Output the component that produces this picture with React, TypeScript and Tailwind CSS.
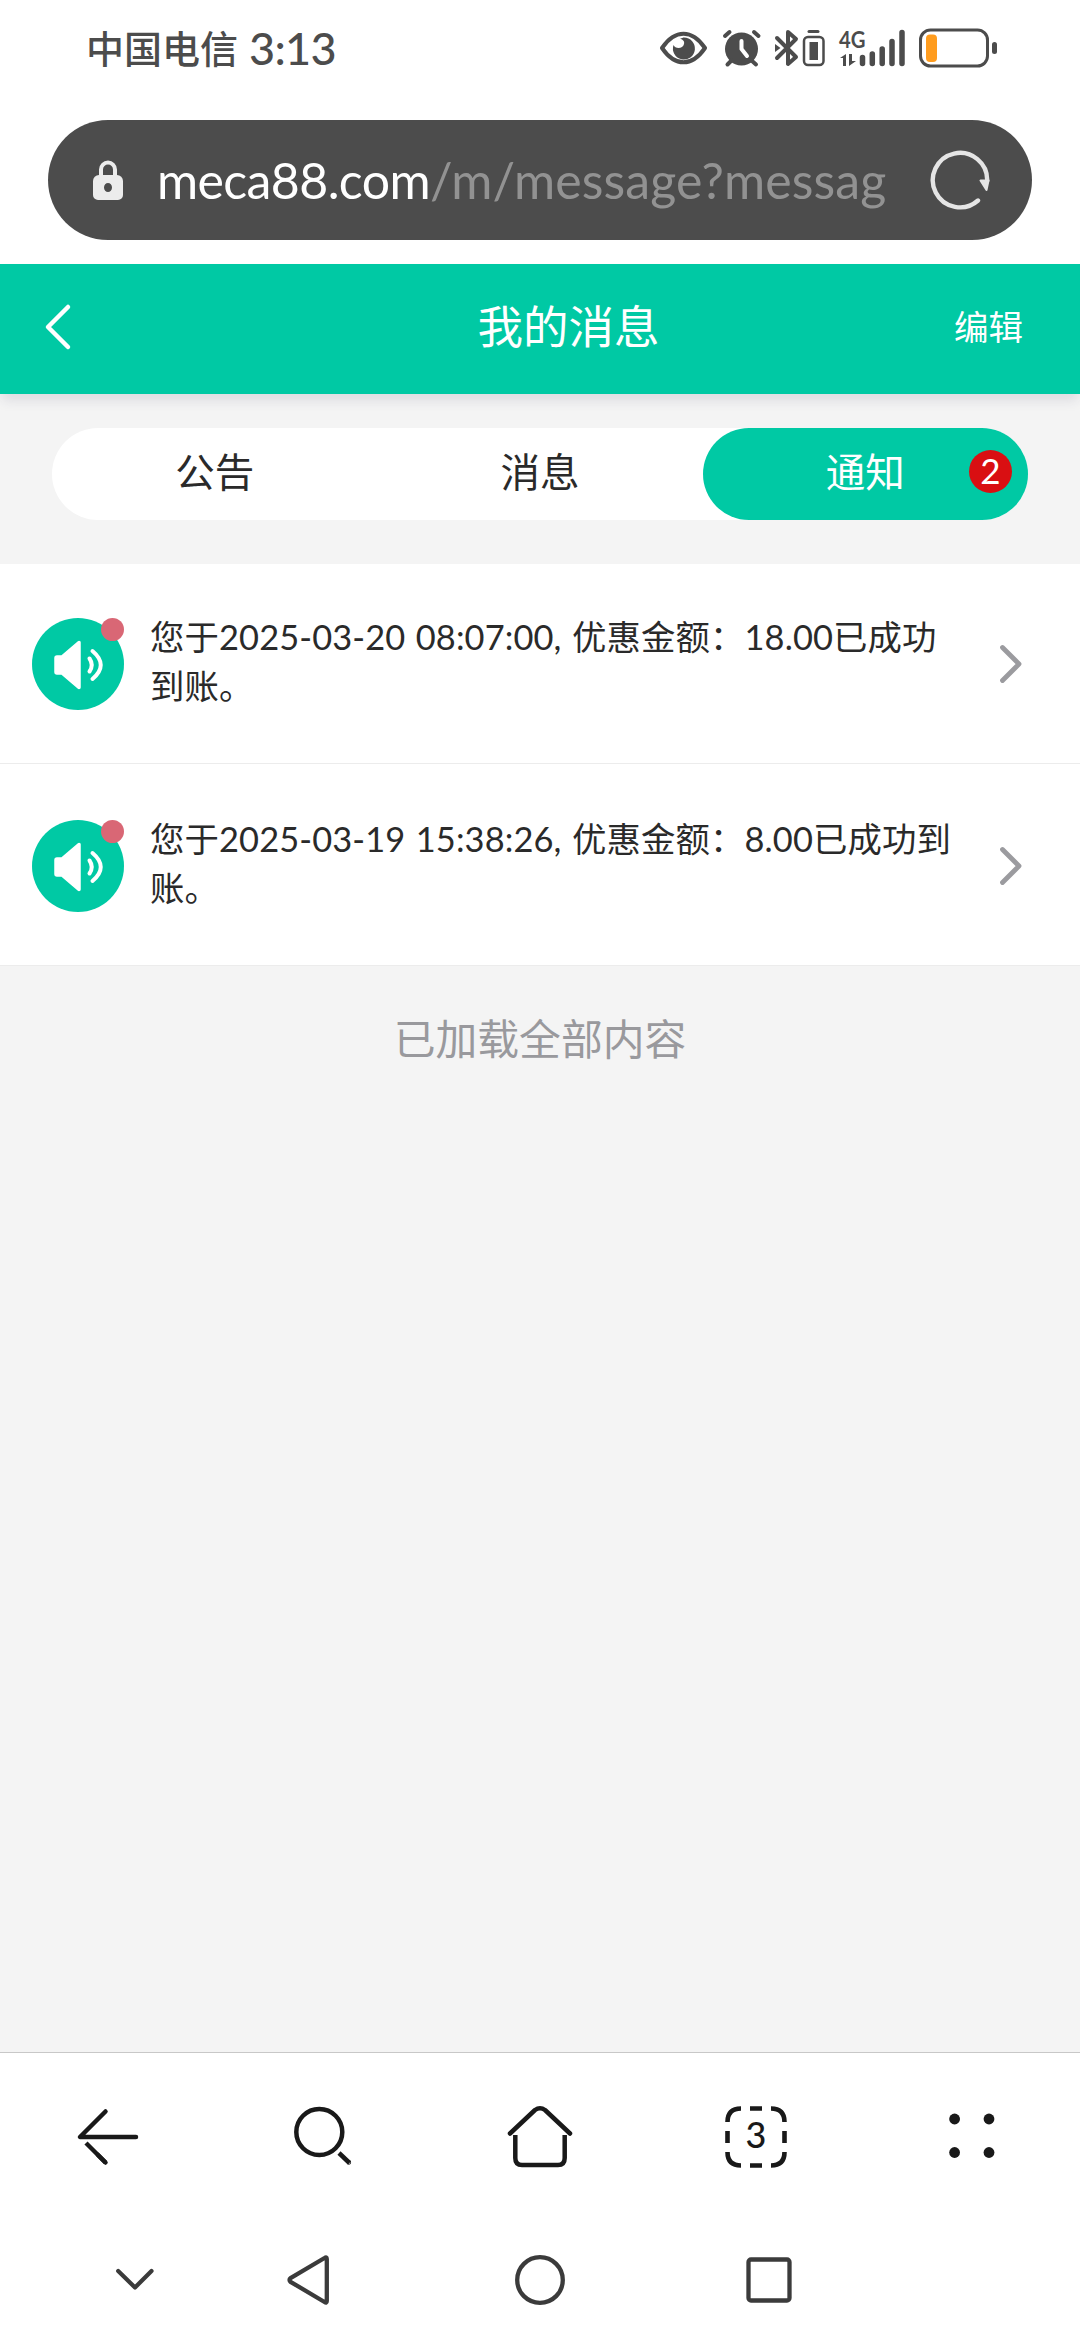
import React from 'react';

interface Message {
  id: number;
  text: string;
}

const messages: Message[] = [
  { id: 1, text: '您于2025-03-20 08:07:00, 优惠金额：18.00已成功到账。' },
  { id: 2, text: '您于2025-03-19 15:38:26, 优惠金额：8.00已成功到账。' },
];

const StatusBar: React.FC = () => (
  <div className="flex h-[96px] items-center pl-[86px] pr-[80px] text-[#4c4c4c]">
    <span className="text-[38px] leading-none font-medium">中国电信</span>
    <span className="ml-[11px] text-[45px] leading-none font-medium tracking-[-0.7px]">3:13</span>
    <svg className="ml-auto" width="340" height="60" viewBox="660 18 340 60" fill="none" stroke="#4c4c4c">
      {/* eye */}
      <path d="M662 48C675 29 692 29 705 48C692 67 675 67 662 48Z" strokeWidth="4" strokeLinejoin="round" />
      <path d="M684 37.500A11 11 0 1 1 673.500 45C675 49 683 49 684 44C685 41 682 39 680 39C682 38 683 37.500 684 37.500Z" fill="#4c4c4c" stroke="none" />
      {/* alarm */}
      <circle cx="741.500" cy="49" r="16.500" fill="#4c4c4c" stroke="none" />
      <path d="M725 36L729.500 32M758.500 36L754 32M732 60L727.500 64.500M751 60L756 64.500" strokeWidth="4" strokeLinecap="round" />
      <path d="M741.500 41V49L747 56" stroke="#fff" strokeWidth="4" strokeLinecap="round" strokeLinejoin="round" />
      {/* bluetooth */}
      <path d="M777 38L796 57L788 64V32L796 39L777 58" strokeWidth="4" strokeLinecap="round" strokeLinejoin="round" />
      <path d="M775 44L780.500 48L775 52Z" fill="#4c4c4c" stroke="none" />
      {/* device battery */}
      <rect x="804" y="37" width="19.500" height="28" rx="4" strokeWidth="2.500" />
      <rect x="809.500" y="42" width="8.500" height="18" fill="#4c4c4c" stroke="none" />
      <path d="M809 31.500H818" strokeWidth="3" strokeLinecap="round" />
      {/* mobile data */}
      <text x="839" y="47.500" fontSize="23.500" fontWeight="700" fill="#4c4c4c" stroke="none" textLength="26.500" lengthAdjust="spacingAndGlyphs">4G</text>
      <path d="M840 58L846 54V66H843V58ZM849 54V66L856 61H852V54Z" fill="#4c4c4c" stroke="none" />
      <path d="M862.500 57.500V63.500M872.300 54V63.500M882.200 49V63.500M892 41.500V63.500M902 32.500V63.500" strokeWidth="5.500" strokeLinecap="round" />
      {/* battery */}
      <rect x="920.500" y="30" width="67" height="36" rx="10" strokeWidth="3" />
      <rect x="926" y="34.500" width="11" height="27.500" rx="4" fill="#ff9c1e" stroke="none" />
      <rect x="992" y="42" width="5" height="12" rx="2.500" fill="#4c4c4c" stroke="none" />
    </svg>
  </div>
);

const AddressBar: React.FC = () => (
  <div className="mx-[48px] mt-[24px] mb-[24px] flex h-[120px] items-center rounded-full bg-[#4c4c4c] pl-[45px] pr-[42px]">
    <svg width="30" height="40" viewBox="0 0 30 40">
      <path d="M8 16V9.500A7 7 0 0 1 22 9.500V16" fill="none" stroke="#ececec" strokeWidth="4" />
      <path fillRule="evenodd" fill="#ececec" d="M6 15H24A6 6 0 0 1 30 21V35A5 5 0 0 1 25 40H5A5 5 0 0 1 0 35V21A6 6 0 0 1 6 15ZM15 23A4 4.500 0 1 0 15 32A4 4.500 0 1 0 15 23Z" />
    </svg>
    <div className="ml-[34px] w-[731px] overflow-hidden text-[50px] leading-[76px] whitespace-nowrap text-[#929292]">
      <span className="tracking-[-0.6px] text-white">meca88.com</span>
      <span className="tracking-[0.15px]">/m/message?messageType=3</span>
    </div>
    <svg className="ml-auto" width="60" height="60" viewBox="0 0 60 60" fill="none">
      <path d="M48 50.500A27.200 27.200 0 1 1 57.200 31" stroke="#e5e5e5" strokeWidth="4.400" strokeLinecap="round" />
      <path d="M50.500 30.500H58.500L56.500 40Z" fill="#e5e5e5" stroke="#e5e5e5" strokeWidth="2" strokeLinejoin="round" />
    </svg>
  </div>
);

const PageHeader: React.FC = () => (
  <div className="relative grid h-[130px] grid-cols-[1fr_auto_1fr] items-center bg-[#00c9a4] pr-[57px] pb-[4px] pl-[44px] text-white shadow-[0_8px_12px_-2px_rgba(40,40,80,0.12)]">
    <svg width="28" height="48" viewBox="0 0 28 48" fill="none" stroke="#fff" strokeWidth="4.500" strokeLinecap="round" strokeLinejoin="round">
      <path d="M24 4L4 24L24 44" />
    </svg>
    <h1 className="ml-[70px] text-[45.500px] leading-none">我的消息</h1>
    <button className="justify-self-end text-[34.500px] leading-none">编辑</button>
  </div>
);

const MessageTabs: React.FC = () => (
  <div className="mx-[52px] mt-[34px] mb-[44px] grid h-[92px] grid-cols-3 rounded-full bg-white text-[39.500px] leading-none text-[#2a2a2a]">
    <button className="pb-[4px]">公告</button>
    <button className="pb-[4px]">消息</button>
    <button className="relative rounded-full bg-[#00c9a4] pb-[4px] text-white">
      通知
      <span className="absolute top-[22px] right-[16px] flex h-[43px] w-[43px] items-center justify-center rounded-full bg-[#d90f12] pb-[2px] text-[35px]">2</span>
    </button>
  </div>
);

const MessageRow: React.FC<{ message: Message }> = ({ message }) => (
  <li className="flex h-[200px] border-b border-[#ececec] bg-white pt-[54px] pl-[32px] last:h-[202px] last:pt-[56px]">
    <div className="relative h-[92px] w-[92px] rounded-full bg-[#00c9a4]">
      <svg width="92" height="92" viewBox="0 0 92 92" fill="none">
        <path d="M25 39H30L47 24.500V69.500L30 55H25Q24 55 24 54V40Q24 39 25 39Z" fill="#fff" stroke="#fff" strokeWidth="3.500" strokeLinejoin="round" />
        <path d="M57.500 40.500Q62 47 57.500 53.500M60.500 33Q77 47 60.500 61" stroke="#fff" strokeWidth="4" strokeLinecap="round" />
      </svg>
      <span className="absolute top-0 right-0 h-[23px] w-[23px] rounded-full bg-[#d96775]" />
    </div>
    <p className="mt-[-6px] ml-[26px] w-[812px] text-[34.400px] leading-[49px] tracking-[0.12px] break-all text-[#2a2a2a] [word-spacing:1.500px]">
      {message.text}
    </p>
    <svg className="mt-[24px] ml-[34px]" width="30" height="44" viewBox="0 0 30 44" fill="none" stroke="#9b9b9f" strokeWidth="4.800" strokeLinecap="round" strokeLinejoin="round">
      <path d="M6.500 5.500L23 22L6.500 38.500" />
    </svg>
  </li>
);

const BrowserToolbar: React.FC = () => (
  <div className="grid h-[168px] grid-cols-5 items-center justify-items-center border-t border-[#c8c8c8] bg-white">
    <svg width="80" height="80" viewBox="0 0 80 80" fill="none" stroke="#191919" strokeWidth="4.500" strokeLinecap="round" strokeLinejoin="round">
      <path d="M37.500 14.500L12 40H68" />
      <path d="M37.500 65.500L18 46" strokeLinecap="butt" />
      <path d="M37.500 65.500L30 58" />
    </svg>
    <svg width="80" height="80" viewBox="0 0 80 80" fill="none" stroke="#191919" strokeWidth="4.500">
      <circle cx="35.300" cy="35" r="23" />
      <path d="M55 56L65.500 66" />
      <circle cx="65" cy="65.500" r=".4" strokeWidth="3.500" />
    </svg>
    <svg width="80" height="80" viewBox="0 0 80 80" fill="none" stroke="#191919" strokeWidth="4.500" strokeLinecap="round" strokeLinejoin="round">
      <path d="M10 36.500L35 13Q40 9.500 45 13L70 36.500" />
      <path d="M15.300 38V61Q15.300 68 22 68H58Q64.700 68 64.700 61V38" strokeLinecap="butt" />
    </svg>
    <div className="relative flex h-[80px] w-[80px] items-center justify-center text-[36px] leading-none font-medium text-[#191919]">
      <svg className="absolute inset-0" width="80" height="80" viewBox="0 0 80 80" fill="none" stroke="#191919" strokeWidth="4.600">
        <path d="M11.500 25Q11.500 11.500 25 11.500M55 11.500Q68.500 11.500 68.500 25M68.500 55Q68.500 68.500 55 68.500M25 68.500Q11.500 68.500 11.500 55" />
        <path d="M34 11.500H46M34 68.500H46M11.500 34V46M68.500 34V46" />
      </svg>
      <span className="pb-[5px]">3</span>
    </div>
    <svg width="80" height="80" viewBox="0 0 80 80" fill="#191919">
      <circle cx="22.600" cy="22" r="5.400" />
      <circle cx="57" cy="22" r="5.400" />
      <circle cx="22.600" cy="55.500" r="5.400" />
      <circle cx="57" cy="55.500" r="5.400" />
    </svg>
  </div>
);

const SystemNav: React.FC = () => (
  <div className="flex h-[120px] items-center bg-white pl-[95px]">
    <svg width="80" height="80" viewBox="0 0 80 80" fill="none" stroke="#3b3b3b" strokeWidth="4.200" strokeLinecap="round" strokeLinejoin="round">
      <path d="M23.200 31L40 47.500L56.500 31" />
    </svg>
    <svg className="ml-[94px]" width="80" height="80" viewBox="0 0 80 80" fill="none" stroke="#3b3b3b" strokeWidth="4.300" strokeLinejoin="round">
      <path d="M57.800 19Q57.800 16.500 55.500 18L21.500 38.200Q19.500 40 21.500 41.800L55.500 62Q57.800 63.500 57.800 61Z" />
    </svg>
    <svg className="ml-[151px]" width="80" height="80" viewBox="0 0 80 80" fill="none" stroke="#3b3b3b" strokeWidth="4.300">
      <circle cx="40" cy="40" r="22.800" />
    </svg>
    <svg className="ml-[149px]" width="80" height="80" viewBox="0 0 80 80" fill="none" stroke="#3b3b3b" strokeWidth="4.300">
      <rect x="19.500" y="19.500" width="41" height="41" rx="2.500" />
    </svg>
  </div>
);

export default function App() {
  return (
    <div className="flex h-[2340px] w-[1080px] flex-col overflow-hidden bg-white font-['Lato','Noto_Sans_CJK_SC',sans-serif]">
      <StatusBar />
      <AddressBar />
      <PageHeader />
      <main className="flex flex-1 flex-col bg-[#f4f4f4]">
        <MessageTabs />
        <ul>
          {messages.map(m => (
            <MessageRow key={m.id} message={m} />
          ))}
        </ul>
        <p className="mt-[48px] text-center text-[41.800px] leading-[50px] text-[#99999d]">已加载全部内容</p>
      </main>
      <BrowserToolbar />
      <SystemNav />
    </div>
  );
}
